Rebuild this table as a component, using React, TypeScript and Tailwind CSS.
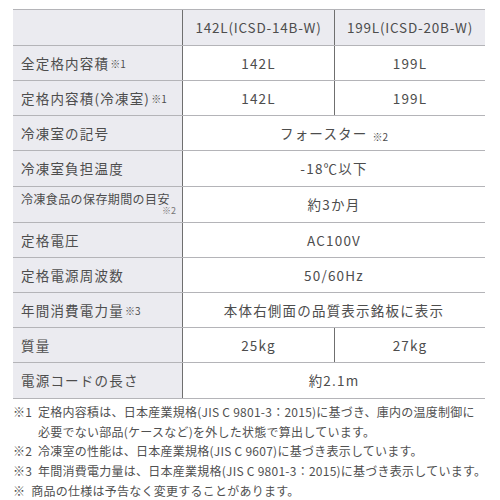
const font = { fontFamily: '"Noto Sans CJK JP", "Noto Sans", sans-serif' };

type Row = {
  label: React.ReactNode;
  values: React.ReactNode[];
  h: string;
};

const Note = ({ n }: { n: string }) => (
  <span className="ml-[1px] text-[10px] tracking-normal">※{n}</span>
);

const rows: Row[] = [
  { label: <>全定格内容積<Note n="1" /></>, values: ["142L", "199L"], h: "h-[35px]" },
  { label: <>定格内容積(冷凍室)<Note n="1" /></>, values: ["142L", "199L"], h: "h-[35px]" },
  { label: "冷凍室の記号", values: [<>フォースター<span className="ml-[5px] text-[10px] tracking-normal relative top-[3px]">※2</span></>], h: "h-[35px]" },
  { label: "冷凍室負担温度", values: ["-18℃以下"], h: "h-[36px]" },
  {
    label: (
      <span className="flex flex-col w-full text-[12px] tracking-[0.4px] leading-[13px] -mt-[2px]">
        <span>冷凍食品の保存期間の目安</span>
        <span className="self-end text-[9px] leading-[10px] tracking-normal text-[#777] mt-[1px]">※2</span>
      </span>
    ),
    values: ["約3か月"],
    h: "h-[36px]",
  },
  { label: "定格電圧", values: ["AC100V"], h: "h-[35px]" },
  { label: "定格電源周波数", values: ["50/60Hz"], h: "h-[35px]" },
  { label: <>年間消費電力量<Note n="3" /></>, values: ["本体右側面の品質表示銘板に表示"], h: "h-[35px]" },
  { label: "質量", values: ["25kg", "27kg"], h: "h-[35px]" },
  { label: "電源コードの長さ", values: ["約2.1m"], h: "h-[36px]" },
];

export default function App() {
  return (
    <div className="w-[500px] h-[500px] bg-white text-[#4d4d4d] pt-[9px] px-[13px]" style={font}>
      {/* Spec table */}
      <div className="w-[472px] border-t border-[#b4b4b8]">
        <div className="flex h-[36px] border-b border-[#b4b4b8] bg-[#ebebf0] text-[13.5px] tracking-[0.8px]">
          <div className="w-[169px]" />
          <div className="w-[152px] border-l border-[#6f6f6f] flex items-center justify-center">
            142L(ICSD-14B-W)
          </div>
          <div className="flex-1 border-l border-[#6f6f6f] flex items-center justify-center">
            199L(ICSD-20B-W)
          </div>
        </div>
        {rows.map((r, i) => (
          <div key={i} className={`flex ${r.h} border-b border-[#b4b4b8] text-[13.5px] tracking-[1.2px]`}>
            <div className="w-[169px] bg-[#ebebf0] flex items-center pl-[8px] pr-[6px] whitespace-nowrap">
              {r.label}
            </div>
            {r.values.length === 2 ? (
              <>
                <div className="w-[152px] border-l border-[#6f6f6f] flex items-center justify-center">
                  {r.values[0]}
                </div>
                <div className="flex-1 border-l border-[#6f6f6f] flex items-center justify-center">
                  {r.values[1]}
                </div>
              </>
            ) : (
              <div className="flex-1 border-l border-[#6f6f6f] flex items-center justify-center">
                {r.values[0]}
              </div>
            )}
          </div>
        ))}
      </div>

      {/* Footnotes */}
      <div className="mt-[3px] text-[12px] leading-[19.7px] tracking-[0.25px] whitespace-nowrap text-[#505050]">
        <p>※1&nbsp; 定格内容積は、日本産業規格(JIS C 9801-3：2015)に基づき、庫内の温度制御に</p>
        <p className="pl-[25px]">必要でない部品(ケースなど)を外した状態で算出しています。</p>
        <p>※2&nbsp; 冷凍室の性能は、日本産業規格(JIS C 9607)に基づき表示しています。</p>
        <p>※3&nbsp; 年間消費電力量は、日本産業規格(JIS C 9801-3：2015)に基づき表示しています。</p>
        <p>※&nbsp; 商品の仕様は予告なく変更することがあります。</p>
      </div>
    </div>
  );
}
